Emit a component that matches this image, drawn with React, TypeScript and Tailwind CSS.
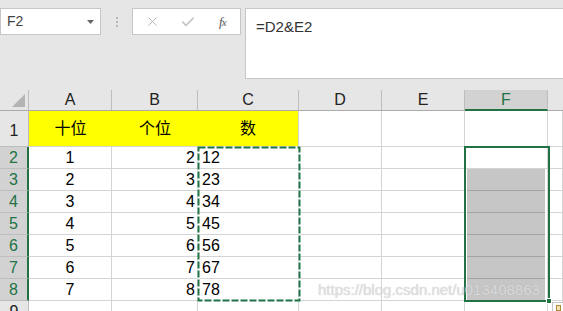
import React from 'react';
import { X, Check } from 'lucide-react';

const GREEN = '#217346';

const rows = [
  { n: 2, a: '1', b: '2', c: '12' },
  { n: 3, a: '2', b: '3', c: '23' },
  { n: 4, a: '3', b: '4', c: '34' },
  { n: 5, a: '4', b: '5', c: '45' },
  { n: 6, a: '5', b: '6', c: '56' },
  { n: 7, a: '6', b: '7', c: '67' },
  { n: 8, a: '7', b: '8', c: '78' },
];

const cell = 'h-full border-r border-b border-[#d4d4d4] flex items-center';

function TopBar() {
  return (
    <div className="h-[90px] bg-[#e6e6e6] pt-[8px] flex items-start">
      {/* name box */}
      <div className="w-[101px] h-[27px] bg-white border border-[#c6c6c6] flex items-center justify-between pl-[6px] pr-[6px]">
        <span className="text-[14px] text-[#444]">F2</span>
        <svg width="7" height="4" viewBox="0 0 7 4">
          <path d="M0 0 L7 0 L3.5 4 Z" fill="#666" />
        </svg>
      </div>
      <div className="w-[31px] h-[27px] flex flex-col items-center justify-center gap-[2px]">
        <div className="w-[2px] h-[2px] bg-[#b8b8b8]" />
        <div className="w-[2px] h-[2px] bg-[#b8b8b8]" />
        <div className="w-[2px] h-[2px] bg-[#b8b8b8]" />
      </div>
      {/* cancel / enter / fx */}
      <div className="w-[109px] h-[27px] bg-white border border-[#c6c6c6] flex items-center pl-[12px] gap-[20px]">
        <X size={15} strokeWidth={1.5} color="#b4b4b4" />
        <Check size={16} strokeWidth={2.5} color="#c4c4c4" />
        <span className="ml-[3px] text-[13px] italic text-[#555] font-['Liberation_Serif',serif] tracking-[-1px]">
          f<span className="text-[11px]">x</span>
        </span>
      </div>
      {/* formula box */}
      <div className="ml-[4px] flex-1 h-[71px] bg-white border border-r-0 border-[#c6c6c6] pl-[10px] pt-[6px]">
        <span className="text-[15px] text-[#333]">=D2&amp;E2</span>
      </div>
    </div>
  );
}

function ColHeader() {
  const hd = 'h-full border-r border-[#bdbdbd] flex items-center justify-center text-[16px] text-[#222]';
  return (
    <div className="h-[21px] flex bg-[#e6e6e6] border-b border-[#ababab]">
      <div className="w-[29px] h-full border-r border-[#bdbdbd] flex items-end justify-end pr-[3px] pb-[3px]">
        <svg width="13" height="13" viewBox="0 0 13 13">
          <path d="M13 0 L13 13 L0 13 Z" fill="#b4b4b4" />
        </svg>
      </div>
      <div className={`w-[83px] ${hd}`}>A</div>
      <div className={`w-[86px] ${hd}`}>B</div>
      <div className={`w-[101px] ${hd}`}>C</div>
      <div className={`w-[83px] ${hd}`}>D</div>
      <div className={`w-[83px] ${hd}`}>E</div>
      <div className="w-[83px] h-[21px] bg-[#d2d2d2] border-r border-[#bdbdbd] border-b-2 border-b-[#217346] flex items-center justify-center text-[16px] text-[#217346]">
        F
      </div>
      <div className="flex-1 h-full" />
    </div>
  );
}

export default function App() {
  return (
    <div className="w-[563px] h-[311px] overflow-hidden bg-white relative font-['Liberation_Sans','Noto_Sans_CJK_SC',sans-serif]">
      <TopBar />
      <ColHeader />

      {/* row 1 */}
      <div className="h-[36px] flex">
        <div className="w-[29px] h-full bg-[#e6e6e6] border-r border-b border-[#bdbdbd] flex items-end justify-center pb-[3px] text-[16px] text-[#222]">
          1
        </div>
        <div className={`w-[83px] ${cell} bg-[#ffff00] border-r-0 justify-center text-[16px] text-black`}>十位</div>
        <div className={`w-[86px] ${cell} bg-[#ffff00] border-r-0 justify-center text-[16px] text-black`}>个位</div>
        <div className={`w-[101px] ${cell} bg-[#ffff00] justify-center text-[16px] text-black`}>数</div>
        <div className={`w-[83px] ${cell}`} />
        <div className={`w-[83px] ${cell}`} />
        <div className={`w-[83px] ${cell}`} />
        <div className={`flex-1 ${cell}`} />
      </div>

      {/* rows 2-8 */}
      {rows.map((r) => (
        <div key={r.n} className="h-[22px] flex">
          <div className="w-[29px] h-full bg-[#d2d2d2] border-b border-[#bdbdbd] border-r-2 border-r-[#217346] flex items-center justify-center text-[16px] text-[#217346]">
            {r.n}
          </div>
          <div className={`w-[83px] ${cell} justify-center text-[16px] text-black`}>{r.a}</div>
          <div className={`w-[86px] ${cell} justify-end pr-[2px] text-[16px] text-black`}>{r.b}</div>
          <div className={`w-[101px] ${cell} pl-[4px] text-[16px] text-black`}>{r.c}</div>
          <div className={`w-[83px] ${cell}`} />
          <div className={`w-[83px] ${cell}`} />
          {r.n === 2 ? (
            <div className={`w-[83px] ${cell}`} />
          ) : (
            <div className="w-[83px] h-full border-r border-[#d4d4d4] px-[2px] bg-white">
              <div className="w-full h-full bg-[#c6c6c6] border-b border-[#a4a4a4]" />
            </div>
          )}
          <div className={`flex-1 ${cell}`} />
        </div>
      ))}

      {/* row 9 */}
      <div className="h-[22px] flex">
        <div className="w-[29px] h-full bg-[#e6e6e6] border-r border-[#bdbdbd] flex items-center justify-center text-[16px] text-[#222]">
          9
        </div>
        <div className={`w-[83px] ${cell}`} />
        <div className={`w-[86px] ${cell}`} />
        <div className={`w-[101px] ${cell}`} />
        <div className={`w-[83px] ${cell}`} />
        <div className={`w-[83px] ${cell}`} />
        <div className={`w-[83px] ${cell}`} />
        <div className={`flex-1 ${cell}`} />
      </div>

      {/* copy marquee around C2:C8 */}
      <svg className="absolute left-[197px] top-[146px]" width="104" height="156">
        <rect x="1.5" y="1.5" width="101" height="153" fill="none" stroke="white" strokeWidth="2" />
        <rect x="1.5" y="1.5" width="101" height="153" fill="none" stroke={GREEN} strokeWidth="2" strokeDasharray="7 2" />
      </svg>

      {/* selection F2:F8 */}
      <div className="absolute left-[464px] top-[146px] w-[86px] h-[156px] border-2 border-[#217346]" />
      <div className="absolute left-[546px] top-[298px] w-[6px] h-[6px] bg-[#217346] border border-white" />

      {/* paste options icon */}
      <div className="absolute left-[552px] top-[302px] w-[14px] h-[12px] bg-white border border-[#c6c6c6] flex items-start justify-start pl-[3px] pt-[2px]">
        <div className="w-[5px] h-[6px] border border-[#b08a3a] bg-[#f3e3b0]" />
      </div>

      {/* watermark */}
      <div className="absolute left-[318px] top-[281px] text-[15px] leading-[18px] text-[rgba(225,225,225,0.85)] [text-shadow:0_0_1px_rgba(150,150,150,0.5)] whitespace-nowrap">
        https://blog.csdn.net/u013408863
      </div>
    </div>
  );
}
